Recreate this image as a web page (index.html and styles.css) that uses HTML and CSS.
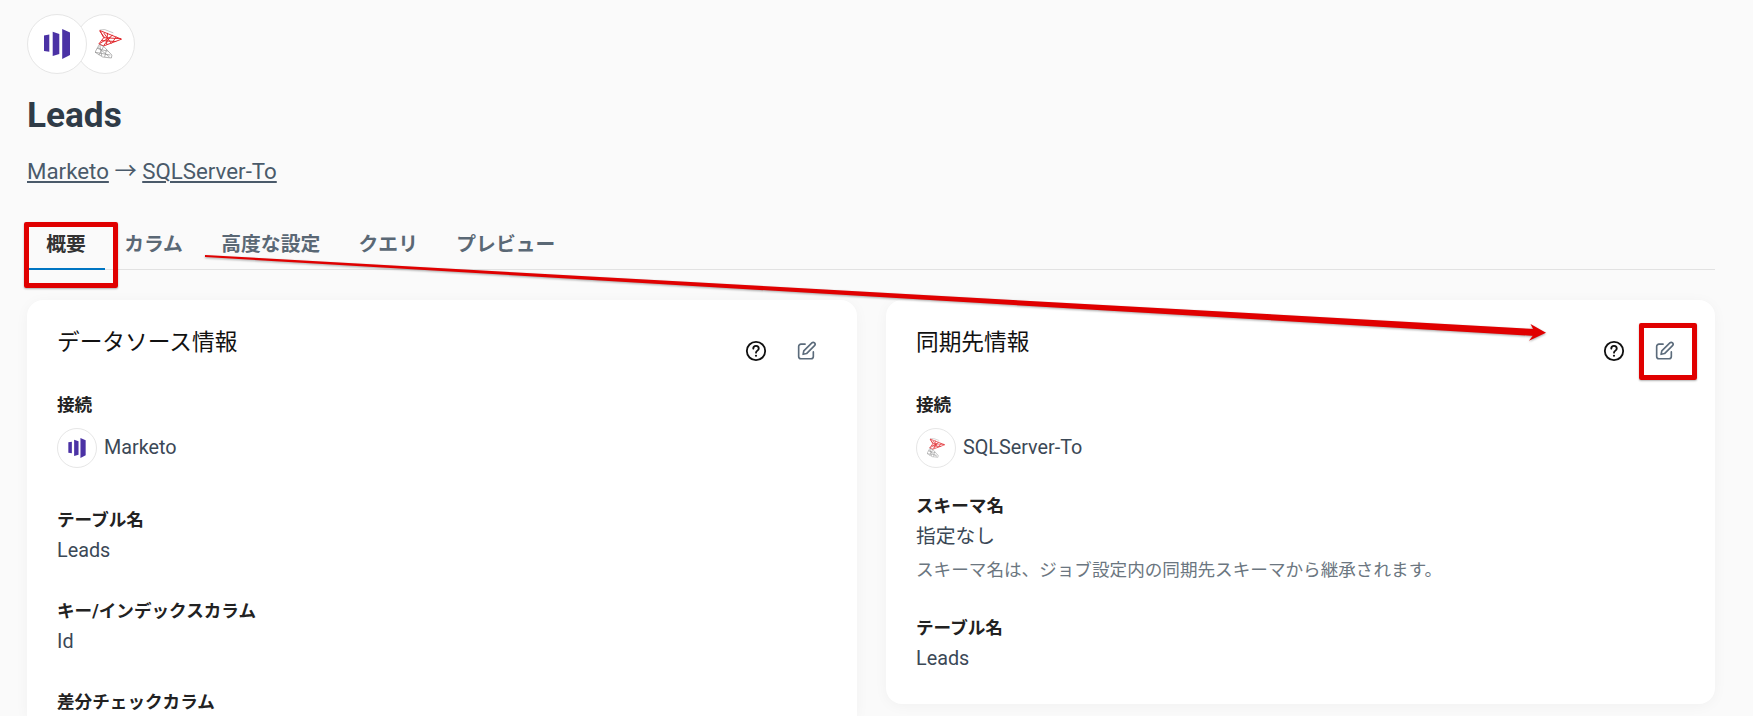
FILE: index.html
```html
<!DOCTYPE html>
<html lang="ja">
<head>
<meta charset="utf-8">
<title>Leads</title>
<link rel="stylesheet" href="styles.css">
</head>
<body>
<svg width="0" height="0" class="defs">
  <defs>
    <symbol id="marketo" viewBox="0 0 26 30">
      <path d="M0 6.4 5.3 5.6V22.8L0 22Z" fill="#4b32a5"/>
      <path d="M8.7 2.8 15.3 5V25L8.7 27Z" fill="#4b32a5"/>
      <path d="M18.2 0 26 3.4V26L18.2 30Z" fill="#4b32a5"/>
    </symbol>
    <symbol id="sql" viewBox="0 0 28 31">
      <g fill="none" stroke="#9c9c9c" stroke-width=".6">
        <path d="M5 1 10 .5 19 4"/>
      </g>
      <g fill="none" stroke="#e0252b" stroke-width="1">
        <path d="M5 1.5 27.5 10.5 9 17.5 4 15.5 9 9Z"/>
        <path d="M9 9 27 10M7 12 22 13M5 15 16 8M9 4 17 15M13 4 12 16M18 6 9 17M5 2 10 9M22 8 18 14"/>
      </g>
      <g fill="none" stroke="#8f8f8f" stroke-width=".7">
        <path d="M4.5 16 9 18 17.5 27 17 30 8 29 0 24Z"/>
        <path d="M2 20 13 23M0 24 16 27M5 17 7 28M9 18 4 27M12 21 10 29M3 19 15 29"/>
      </g>
    </symbol>
    <symbol id="edit" viewBox="0 0 24 24">
      <path d="M11 4.5H6.5A2.5 2.5 0 0 0 4 7V18a2.5 2.5 0 0 0 2.5 2.5H17.5A2.5 2.5 0 0 0 20 18V13" fill="none" stroke="#5b6b7b" stroke-width="1.8" stroke-linecap="round"/>
      <path d="M18.4 3.2a2 2 0 0 1 2.9 2.9L12.6 14.8 8.8 15.6 9.6 11.8Z" fill="none" stroke="#5b6b7b" stroke-width="1.8" stroke-linejoin="round"/>
    </symbol>
    <symbol id="help" viewBox="0 0 24 24">
      <circle cx="12" cy="12" r="10" fill="none" stroke="#111" stroke-width="2"/>
      <path d="M9 9.4a3 3 0 0 1 6 .1c0 2-3 2.2-3 4.3" fill="none" stroke="#111" stroke-width="2" stroke-linecap="round"/>
      <circle cx="12" cy="17.2" r="1.2" fill="#111"/>
    </symbol>
  </defs>
</svg>

<main class="page">
  <div class="logos">
    <span class="logo logo-large logo-first"><svg class="mk-large"><use href="#marketo"/></svg></span>
    <span class="logo logo-large logo-second"><svg class="sql-large"><use href="#sql"/></svg></span>
  </div>
  <h1 class="title">Leads</h1>
  <p class="path"><a href="#">Marketo</a> → <a href="#">SQLServer-To</a></p>

  <nav class="tabs">
    <a class="tab tab-active" href="#">概要</a>
    <a class="tab" href="#">カラム</a>
    <a class="tab" href="#">高度な設定</a>
    <a class="tab" href="#">クエリ</a>
    <a class="tab" href="#">プレビュー</a>
  </nav>

  <div class="cards">
    <section class="card card-left">
      <header class="card-head">
        <h2 class="card-title">データソース情報</h2>
        <div class="card-actions">
          <svg class="icon"><use href="#help"/></svg>
          <svg class="icon"><use href="#edit"/></svg>
        </div>
      </header>
      <div class="group group-conn">
        <div class="label">接続</div>
        <div class="conn"><span class="logo logo-small"><svg class="mk-small"><use href="#marketo"/></svg></span><span class="value">Marketo</span></div>
      </div>
      <div class="group"><div class="label">テーブル名</div><div class="value">Leads</div></div>
      <div class="group"><div class="label">キー/インデックスカラム</div><div class="value">Id</div></div>
      <div class="group group-last"><div class="label">差分チェックカラム</div></div>
    </section>

    <section class="card card-right">
      <header class="card-head">
        <h2 class="card-title">同期先情報</h2>
        <div class="card-actions">
          <svg class="icon"><use href="#help"/></svg>
          <svg class="icon"><use href="#edit"/></svg>
        </div>
      </header>
      <div class="group group-tight">
        <div class="label">接続</div>
        <div class="conn"><span class="logo logo-small"><svg class="sql-small"><use href="#sql"/></svg></span><span class="value">SQLServer-To</span></div>
      </div>
      <div class="group group-schema">
        <div class="label">スキーマ名</div>
        <div class="value">指定なし</div>
        <div class="note">スキーマ名は、ジョブ設定内の同期先スキーマから継承されます。</div>
      </div>
      <div class="group group-last"><div class="label">テーブル名</div><div class="value">Leads</div></div>
    </section>
  </div>
</main>

<div class="mark mark-tab"></div>
<div class="mark mark-edit"></div>
<svg class="arrow" width="1753" height="716" viewBox="0 0 1753 716">
  <path d="M205 255 1535 329 1535 336 205 257Z" fill="#e00000"/>
  <path d="M1530.5 324 1546 332.7 1529 340.7 1535 332.7Z" fill="#e00000"/>
</svg>
</body>
</html>
```
FILE: styles.css
```css
* { box-sizing: border-box; }
html, body { margin: 0; height: 100%; overflow: hidden; }
body {
  background: #fafafa;
  color: #3b4856;
  font-family: Roboto, "Noto Sans CJK JP", sans-serif;
  position: relative;
}
.defs { position: absolute; }
.page { padding: 14px 38px 0 27px; }

.logos { display: flex; height: 60px; }
.logo {
  display: inline-flex;
  align-items: center;
  justify-content: center;
  border-radius: 50%;
  border: 1px solid #e6e6e6;
  background: #fff;
  flex: none;
}
.logo-large { width: 60px; height: 60px; }
.logo-first { position: relative; z-index: 1; }
.logo-second { margin-left: -12px; }
.mk-large { width: 26px; height: 30px; }
.sql-large { width: 27px; height: 30px; margin-left: 7px; }
.logo-small { width: 40px; height: 40px; }
.mk-small { width: 18px; height: 20px; }
.sql-small { width: 18px; height: 20px; }

.title {
  margin: 19px 0 0;
  font-size: 35.2px;
  line-height: 44px;
  font-weight: 700;
  color: #2f3b47;
}
.path {
  margin: 20px 0 0;
  font-size: 22.3px;
  line-height: 28px;
  color: #4a5a6a;
}
.path a { color: inherit; text-decoration: underline; }

.tabs {
  display: flex;
  margin-top: 23px;
  height: 62px;
  border-bottom: 1px solid #e2e2e2;
}
.tab {
  padding: 22px 19.2px 0;
  height: 62px;
  font-size: 19.8px;
  line-height: 30px;
  font-weight: 700;
  color: #5a6875;
  text-decoration: none;
}
.tab-active { color: #333; border-bottom: 2px solid #0075c2; }

.cards {
  display: grid;
  grid-template-columns: 830px 829px;
  gap: 29px;
  align-items: start;
  margin-top: 30px;
}
.card {
  background: #fff;
  border-radius: 16px;
  box-shadow: 0 2px 14px rgba(0, 0, 0, .04);
  padding: 27px 30px 0;
}
.card-left { height: 417px; border-radius: 16px 16px 0 0; }
.card-right { height: 404px; }

.card-head { display: flex; justify-content: space-between; height: 66px; }
.card-title {
  margin: 0;
  font-size: 22.7px;
  line-height: 32px;
  font-weight: 400;
  color: #111;
}
.card-actions { display: flex; gap: 28px; padding: 13px 10px 0 0; }
.icon { width: 22px; height: 22px; }

.label { font-size: 17.6px; line-height: 24px; margin-bottom: 2px; font-weight: 700; color: #222; }
.value { font-size: 19.8px; line-height: 34px; color: #3b4856; }
.group { margin-bottom: 31px; }
.group-conn { margin-bottom: 40px; }
.group-tight { margin-bottom: 26px; }
.group-schema { margin-bottom: 30px; }
.group-last { margin-bottom: 0; }
.conn { display: flex; align-items: center; gap: 7px; margin-top: 11px; height: 40px; }
.note { font-size: 17.6px; line-height: 32px; color: #6b7680; }

.mark { position: absolute; border: 5px solid #e00000; border-radius: 2px; box-shadow: 0 1px 2px rgba(0,0,0,.3); }
.mark-tab { left: 24px; top: 222px; width: 94px; height: 66px; }
.mark-edit { left: 1639px; top: 323px; width: 58px; height: 57px; }
.arrow { position: absolute; left: 0; top: 0; pointer-events: none; filter: drop-shadow(0 1px 1px rgba(0, 0, 0, .35)); }
```
